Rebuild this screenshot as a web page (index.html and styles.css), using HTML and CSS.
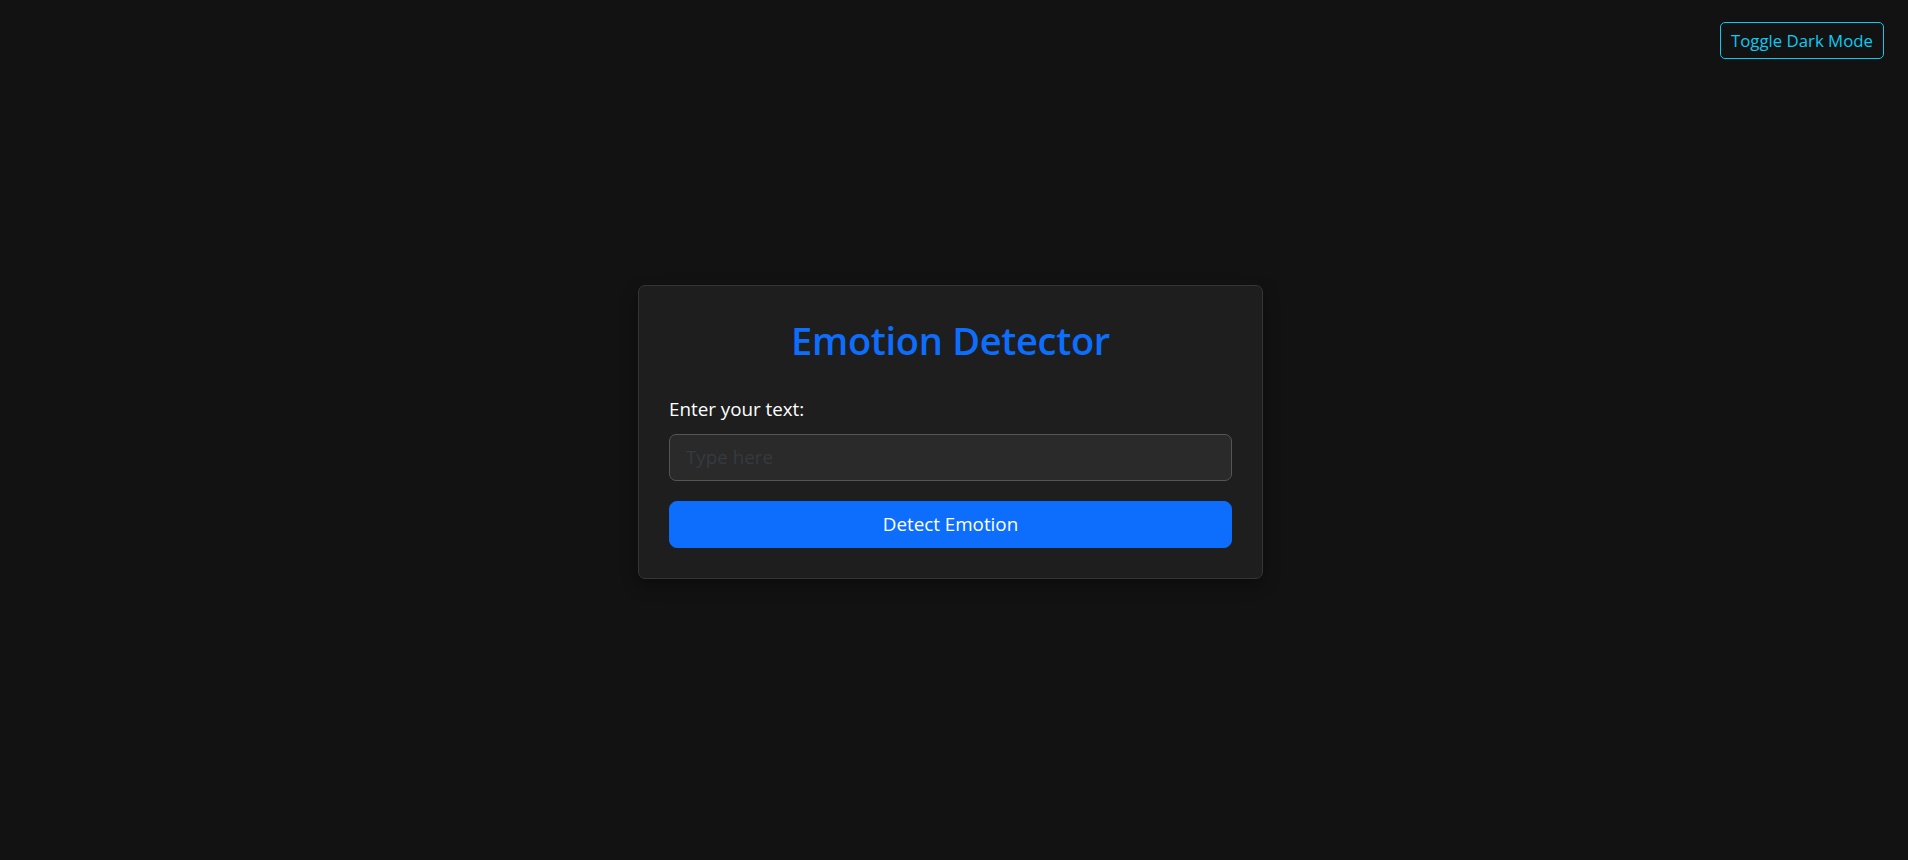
FILE: index.html
```html
<!DOCTYPE html>
<html lang="en">
<head>
<meta charset="utf-8">
<title>Emotion Detector</title>
<link rel="stylesheet" href="styles.css">
</head>
<body>
<button class="toggle-btn" type="button">Toggle Dark Mode</button>
<main class="page">
  <section class="card">
    <h1 class="title">Emotion Detector</h1>
    <form class="form">
      <label class="label" for="text">Enter your text:</label>
      <input class="input" id="text" type="text" placeholder="Type here">
      <button class="detect-btn" type="button">Detect Emotion</button>
    </form>
  </section>
</main>
</body>
</html>
```

FILE: styles.css
```css
* { box-sizing: border-box; }

html, body {
  margin: 0;
  padding: 0;
  height: 100%;
}

body {
  background: #121212;
  color: #ffffff;
  font-family: "Open Sans", "Noto Sans", "Liberation Sans", sans-serif;
  font-size: 16px;
  line-height: 1.5;
  position: relative;
}

.toggle-btn {
  position: absolute;
  top: 22px;
  right: 24px;
  height: 37px;
  padding: 0 10px;
  background: transparent;
  border: 1px solid #0dcaf0;
  border-radius: 5px;
  color: #0dcaf0;
  font-family: inherit;
  font-size: 16.8px;
  line-height: 35px;
  cursor: pointer;
}

.page {
  min-height: 100vh;
  display: flex;
  align-items: center;
  justify-content: center;
  padding: 3px 7px 0 0;
}

.card {
  width: 625px;
  background: #1e1e1e;
  border: 1px solid #353535;
  border-radius: 7px;
  padding: 30px;
  box-shadow: 0 6px 16px rgba(0, 0, 0, 0.35);
}

.title {
  margin: 0 0 30px;
  text-align: center;
  color: #0d6efd;
  font-size: 38px;
  font-weight: 600;
  letter-spacing: -0.3px;
  line-height: 48px;
}

.form {
  display: flex;
  flex-direction: column;
}

.label {
  font-size: 18.8px;
  line-height: 30px;
  color: #ffffff;
  margin-bottom: 10px;
}

.input {
  height: 47px;
  padding: 0 16px;
  background: #2a2a2a;
  border: 1px solid #555555;
  border-radius: 7px;
  color: #ffffff;
  font-family: inherit;
  font-size: 18.8px;
  outline: none;
  margin-bottom: 20px;
}

.input::placeholder {
  color: #343a40;
}

.detect-btn {
  height: 47px;
  background: #0d6efd;
  border: 1px solid #0d6efd;
  border-radius: 8px;
  color: #ffffff;
  font-family: inherit;
  font-size: 18.8px;
  cursor: pointer;
}
```
